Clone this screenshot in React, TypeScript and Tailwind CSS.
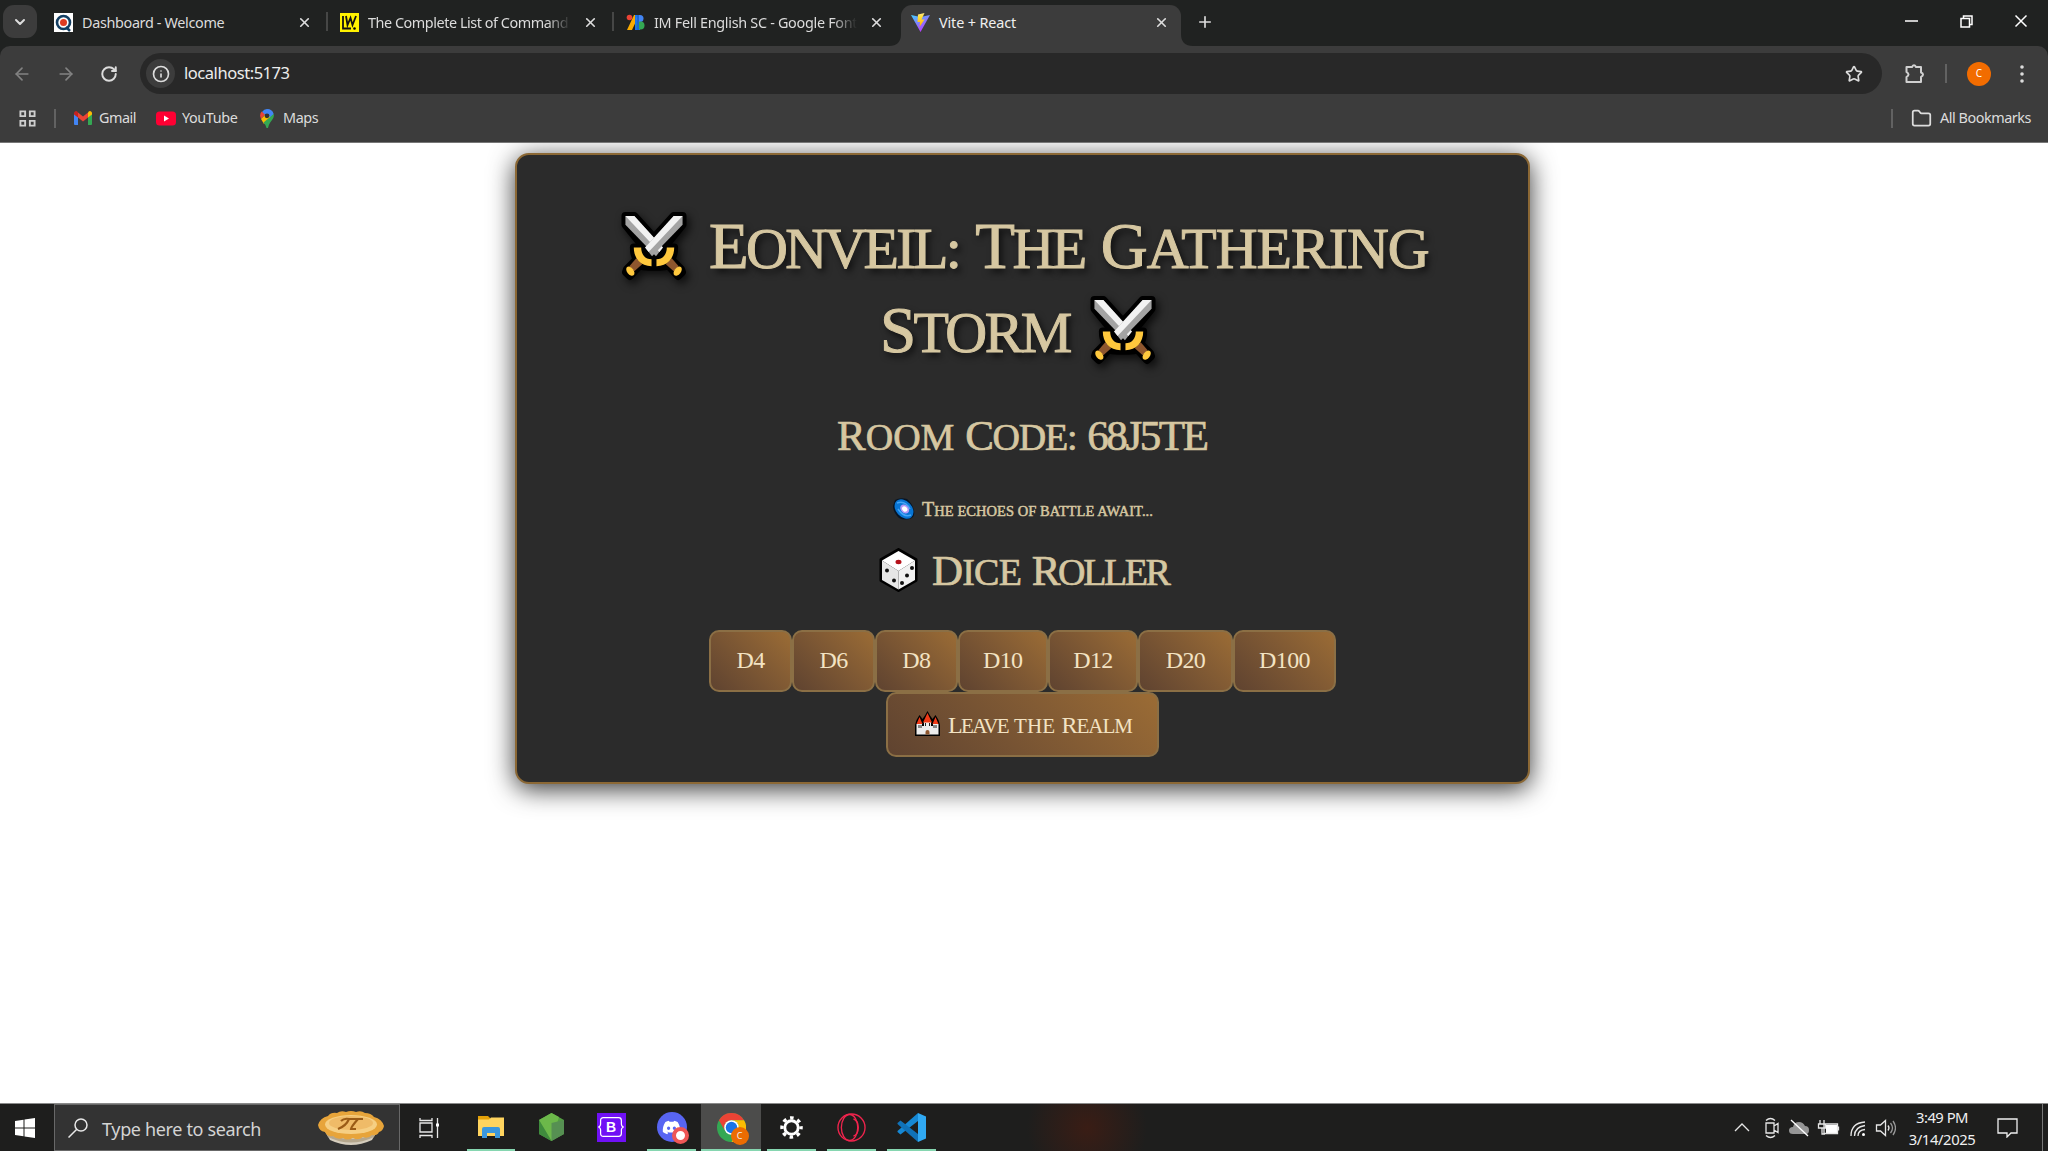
import type { ReactNode } from 'react';
import { FaDiscord } from 'react-icons/fa';
import { Star, Folder, RotateCw, ArrowLeft, ArrowRight, ChevronDown, Info, Plus, X } from 'lucide-react';

/* Capital initial followed by slightly shorter capitals. */
function Caps({ text, track = '', small }: { text: string; track?: string; small: string }) {
  return (
    <span className={track}>
      {text[0]}
      <span className={`uppercase leading-none ${small}`}>{text.slice(1)}</span>
    </span>
  );
}

function Swords({ className = '' }: { className?: string }) {
  const blade = (
    <g>
      <path d="M4 4h9l29 32-7 9L4 13z" fill="#a3a3a3" />
      <path d="M4 4h9l29 32-3.500 4.500L4 4z" fill="#f2f2f2" />
      <path d="M45 53l6-6 7 8-5 5z" fill="#8e562e" />
      <path d="M46 36h7.500c0 11-7 19-18 19v-7c6.500 0 10.500-5 10.500-12z" fill="#ffc83d" />
      <ellipse cx="57" cy="60" rx="3.300" ry="5.300" transform="rotate(38 57 60)" fill="#ffc83d" />
    </g>
  );
  const outline = (
    <path d="M4 4h9l29 32h11.500c0 5-1 9-3 12l10 10 1 3-4 4-10-11c-4 2-8 2-16 1v-8L4 13z" fill="#000" stroke="#000" strokeWidth="8" strokeLinejoin="round" />
  );
  return (
    <svg viewBox="0 0 66 70" className={`h-[69px] w-[66px] shrink-0 drop-shadow-[3px_4px_4px_rgba(0,0,0,0.7)] ${className}`}>
      {outline}
      <g transform="matrix(-1 0 0 1 66 0)">{outline}</g>
      {blade}
      <g transform="matrix(-1 0 0 1 66 0)">{blade}</g>
    </svg>
  );
}

function Galaxy() {
  return (
    <svg viewBox="0 0 22 22" className="mt-px h-[22px] w-[22px]">
      <path d="M2 2Q7-1 14 1Q20 6 21 13Q22 18 19 20Q12 23 6 20Q0 14 0 8Z" fill="#071525" />
      <ellipse cx="11" cy="11" rx="11" ry="8" transform="rotate(48 11 11)" fill="#0875d4" />
      <path d="M4 5q8-3 13 6M18 17q-7 3-13-6" stroke="#45a5f5" strokeWidth="1.500" fill="none" />
      <ellipse cx="11.500" cy="10.500" rx="5" ry="3.800" transform="rotate(45 11 11)" fill="#b59af5" />
      <ellipse cx="11.500" cy="10.500" rx="3" ry="2.300" transform="rotate(45 11 11)" fill="#fff" />
    </svg>
  );
}

function Die() {
  return (
    <svg viewBox="0 0 39 44" className="mt-px h-[44px] w-[39px]">
      <path d="M19.500 1.500L37 11.500v21L19.500 42.500 2 32.500v-21z" fill="#000" stroke="#000" strokeWidth="3" strokeLinejoin="round" />
      <path d="M19.500 3L36 12.500 19.500 23 3 12.500z" fill="#fff" />
      <path d="M3 12.500L19.500 23v18.500L3 32z" fill="#e6e6e6" />
      <path d="M36 12.500L19.500 23v18.500L36 32z" fill="#f1f1f1" />
      <ellipse cx="19.500" cy="14" rx="3" ry="2.200" fill="#b5121b" />
      <g fill="#111"><circle cx="8" cy="22.500" r="2" /><circle cx="15" cy="32.500" r="2" /><circle cx="33" cy="20" r="2" /><circle cx="28" cy="27.500" r="2" /><circle cx="23" cy="35" r="2" /></g>
    </svg>
  );
}

function Castle() {
  return (
    <svg viewBox="0 0 25 26" className="mt-[17px] h-[26px] w-[25px]">
      <path d="M0 25V14l1.500-5L4.500 4l3 4L10 4.500 12.500 0 15 4.500 17.500 8l3-4 3 5L25 14v11z" fill="#000" />
      <path d="M1.500 23.500V13H7v2h2v-4h7v4h2v-2h5.500v10.500z" fill="#ececec" />
      <path d="M1.500 13l3-7 3 7zM8 11.500L12.500 2 17 11.500zM17.500 13l3-7 3 7z" fill="#f03a17" />
      <path d="M4 14v3M6 14v3M10.500 12v3M14.500 12v3M19 14v3M21 14v3" stroke="#222" />
      <path d="M10.500 23.500V21a2 2 0 014 0v2.500z" fill="#8e562e" />
    </svg>
  );
}

function Tab({ icon, title, titleClass, className, fade }: { icon: ReactNode; title: string; titleClass: string; className: string; fade?: string }) {
  return (
    <div className={`flex h-[34px] items-center ${className}`}>
      <div className="h-[19px] w-[19px] shrink-0">{icon}</div>
      <div className={`ml-[9px] mt-[2px] w-[203px] whitespace-nowrap text-[14.4px] ${fade ?? ''}`}>
        <span className={titleClass}>{title}</span>
      </div>
      <X className="ml-[12px] h-[15px] w-[15px] shrink-0 text-[#dedede]" strokeWidth={2.6} />
    </div>
  );
}

const fadeMask = '[mask-image:linear-gradient(to_right,#000_88%,transparent)]';

function Browser() {
  return (
    <header className="h-[143px] bg-[#202221] font-['Noto_Sans','Open_Sans',sans-serif] text-[#dcdcdc]">
      <div className="flex h-[46px] items-start pt-[5px]">
        <div className="ml-[3px] flex h-[33px] w-[34px] items-center justify-center rounded-[11px] bg-[#3c3c3c]">
          <ChevronDown className="h-4 w-4" strokeWidth={3} />
        </div>
        <Tab className="ml-[17px] w-[272px]" title="Dashboard - Welcome" titleClass="tracking-[-0.34px]" icon={
          <svg viewBox="0 0 19 19"><path fill="#fff" d="M0 0h19v19H0z" /><circle cx="9.500" cy="9.500" r="6.500" fill="none" stroke="#143f63" strokeWidth="2.600" /><circle cx="9.500" cy="9.500" r="3.500" fill="#df3c22" /><path d="M12 14l4 4" stroke="#143f63" strokeWidth="2.500" /></svg>
        } />
        <div className="mt-[7px] h-[19px] w-[2px] bg-[#464746]" />
        <Tab className="ml-[12px] w-[272px]" title="The Complete List of Command" titleClass="tracking-[-0.45px]" fade={fadeMask} icon={
          <svg viewBox="0 0 19 19"><path fill="#fff200" d="M0 0h19v19H0z" /><path d="M3 3v12.500H11M6 3l1.500 9L10.500 5l2 7L16 3" fill="none" stroke="#111" strokeWidth="1.800" /><circle cx="14.500" cy="15.500" r="1.300" /></svg>
        } />
        <div className="mt-[7px] h-[19px] w-[2px] bg-[#464746]" />
        <Tab className="ml-[12px] w-[264px]" title="IM Fell English SC - Google Font" titleClass="tracking-[-0.3px]" fade={fadeMask} icon={
          <svg viewBox="0 0 19 19"><path d="M8 2h5L6 17H1z" fill="#f9ab00" /><circle cx="3.500" cy="4.500" r="2.800" fill="#ea4335" /><path d="M9 2h5v15H9z" fill="#1a73e8" /><circle cx="14" cy="5.500" r="3.500" fill="#4285f4" /><circle cx="14.500" cy="12.500" r="4" fill="#34a853" /><path d="M11 2h2v15h-2z" fill="#1967d2" /></svg>
        } />
        <div className="-ml-px flex h-[41px] w-[304px] items-end">
          <svg viewBox="0 0 12 12" className="h-3 w-3 shrink-0"><path d="M12 0v12H0Q12 12 12 0" fill="#3c3c3c" /></svg>
          <div className="h-[41px] w-[280px] rounded-t-[11px] bg-[#3c3c3c]">
            <Tab className="ml-[10px]" title="Vite + React" titleClass="text-[#f0f0f0] tracking-[-0.13px]" icon={
              <svg viewBox="0 0 19 19">
                <defs>
                  <linearGradient id="vite-v" x1="0" y1="0" x2="0.6" y2="1"><stop stopColor="#41d1ff" /><stop offset="1" stopColor="#bd34fe" /></linearGradient>
                  <linearGradient id="vite-b" x1="0" y1="0" x2="0" y2="1"><stop stopColor="#ffea83" /><stop offset="0.3" stopColor="#ffdd35" /><stop offset="1" stopColor="#ffa800" /></linearGradient>
                </defs>
                <path d="M0 2l9.500 17L19 2l-9.500 2z" fill="url(#vite-v)" /><path d="M13.500 0L7 1.500 6.500 9H9l-.5 5 5-7.500h-3z" fill="url(#vite-b)" />
              </svg>
            } />
          </div>
          <svg viewBox="0 0 12 12" className="h-3 w-3 shrink-0"><path d="M0 0v12h12Q0 12 0 0" fill="#3c3c3c" /></svg>
        </div>
        <Plus className="ml-[3px] mt-[8px] h-[18px] w-[18px]" strokeWidth={2.2} />
        <svg viewBox="0 0 124 14" className="ml-auto mr-[20px] mt-[9px] h-[14px] w-[124px]" fill="none" stroke="#fff" strokeWidth="1.500">
          <path d="M1 7h13M111.500 1.500l11 11M122.500 1.500l-11 11" /><path d="M57 4.500h8.500V13H57zM59.500 4V2H68v8.500h-2" />
        </svg>
      </div>

      <div className="h-[97px] rounded-t-[10px] border-b border-[#777] bg-[#3c3c3c]">
        <div className="flex h-[55px] items-center">
          <ArrowLeft className="ml-[12px] h-5 w-5 text-[#828282]" strokeWidth={2} />
          <ArrowRight className="ml-[24px] h-5 w-5 text-[#828282]" strokeWidth={2} />
          <RotateCw className="ml-[24px] h-[18px] w-[18px]" strokeWidth={2.6} />
          <div className="ml-[22px] flex h-[41px] w-[1742px] items-center rounded-full bg-[#282828]">
            <div className="ml-[6px] flex h-[29px] w-[29px] items-center justify-center rounded-full bg-[#3c3c3c]"><Info className="h-[18px] w-[18px]" strokeWidth={2.2} /></div>
            <span className="ml-[9px] text-[16.5px] tracking-[-0.45px] text-[#ececec]">localhost:5173</span>
            <Star className="ml-auto mr-[19px] h-[18px] w-[18px]" strokeWidth={2.2} />
          </div>
          <svg viewBox="0 0 20 20" className="ml-[23px] h-5 w-5" fill="none" stroke="#d0d0d0" strokeWidth="2"><path d="M1.500 3h5.500q2-3.500 4 0h5v5.500q4 1.500 0 4.500V18H1.500v-5q4-2.500 0-5z" strokeLinejoin="round" /></svg>
          <div className="ml-[20px] h-[19px] w-[2px] bg-[#626262]" />
          <div className="ml-[20px] flex h-[24px] w-[24px] items-center justify-center rounded-full bg-[#f26c00] text-[10px] text-white">C</div>
          <svg viewBox="0 0 4 18" className="ml-[29px] h-[18px] w-1 fill-[#dcdcdc]"><circle cx="2" cy="2" r="1.800" /><circle cx="2" cy="9" r="1.800" /><circle cx="2" cy="16" r="1.800" /></svg>
        </div>
        <div className="flex h-[34px] items-center text-[14.4px]">
          <svg viewBox="0 0 18 18" className="ml-[19px] h-[17px] w-[17px]" fill="none" stroke="#cfcfcf" strokeWidth="2"><path d="M1.500 1.500h5v5h-5zM11.500 1.500h5v5h-5zM1.500 11.500h5v5h-5zM11.500 11.500h5v5h-5z" /></svg>
          <div className="ml-[18px] h-[19px] w-[2px] bg-[#626262]" />
          <svg viewBox="0 0 18 14" className="ml-[18px] h-[14px] w-[18px]"><path d="M0 2v11a1 1 0 001 1h3V5z" fill="#4285f4" /><path d="M18 2v11a1 1 0 01-1 1h-3V5z" fill="#34a853" /><path d="M4 5V1.500L9 5.500l5-4V6.500L9 10.500 4 6.500z" fill="#ea4335" /><path d="M0 2a2 2 0 013.500-1.200L4 1.500v5L0 3.500z" fill="#c5221f" /><path d="M18 2a2 2 0 00-3.500-1.200L14 1.500v5l4-3z" fill="#fbbc04" /></svg>
          <span className="ml-[7px] w-[57px] tracking-[-0.5px]">Gmail</span>
          <svg viewBox="0 0 20 14" className="h-[15px] w-[20px]"><rect width="20" height="14" rx="3.500" fill="#f03" /><path d="M8 4v6l5-3z" fill="#fff" /></svg>
          <span className="ml-[6px] w-[78px] tracking-[-0.4px]">YouTube</span>
          <svg viewBox="0 0 14 19" className="h-[19px] w-[14px]"><path d="M7 0a7 7 0 016.700 5L7 13 2 3Q4 0 7 0" fill="#4285f4" /><path d="M1.600 2.500L5 5.500 1 10Q-1 5.500 1.600 2.500" fill="#ea4335" /><path d="M1 10l8-8 1 7-6 6z" fill="#fbbc04" /><path d="M13.700 5c1 4-2 6-3.500 8.500Q8.500 16 8 19H6.500Q6 16 3.500 13.500z" fill="#34a853" /><path d="M4 2Q9-2 13 4L9 8 4.500 4z" fill="#4285f4" /><circle cx="7" cy="6.800" r="2.400" fill="#333" /></svg>
          <span className="ml-[9px] tracking-[-0.4px]">Maps</span>
          <div className="ml-auto h-[19px] w-[2px] bg-[#626262]" />
          <Folder className="ml-[18px] h-[21px] w-[21px]" strokeWidth={2} />
          <span className="ml-[8px] mr-[17px] tracking-[-0.45px]">All Bookmarks</span>
        </div>
      </div>
    </header>
  );
}

const dice = [
  { label: 'D4', size: 'w-[83px]' },
  { label: 'D6', size: 'w-[83px]' },
  { label: 'D8', size: 'w-[82.500px]' },
  { label: 'D10', size: 'w-[90.500px]' },
  { label: 'D12', size: 'w-[90px]' },
  { label: 'D20', size: 'w-[95px]' },
  { label: 'D100', size: 'w-[103px]' },
];

function Card() {
  return (
    <main className="ml-[515px] mt-[10px] flex h-[631px] w-[1015px] flex-col rounded-[14px] border-[2.600px] border-[#8b6835] bg-[#2b2b2b] font-['Liberation_Serif',serif] text-[#d6c7a1] shadow-[0_5px_26px_rgba(0,0,0,0.8)]">
      <h1 className="mt-[49px] whitespace-pre text-[65px] leading-[84px] [-webkit-text-stroke:1px_#d6c7a1] [text-shadow:3px_4px_7px_rgba(0,0,0,0.75)]">
        <div className="ml-[104px] flex h-[84px]">
          <Swords className="mt-[8px]" />
          <span className="ml-[22px]"><Caps text="Eonveil:" track="tracking-[-2.7px]" small="text-[58px]" /> <Caps text="The" track="tracking-[-2.6px]" small="text-[58px]" /> <Caps text="Gathering" track="tracking-[-1px]" small="text-[58px]" /></span>
        </div>
        <div className="ml-[363px] flex h-[84px]">
          <Caps text="Storm" track="tracking-[-2.6px]" small="text-[58px]" />
          <Swords className="ml-[20px] mt-[8px]" />
        </div>
      </h1>
      <h2 className="ml-[320px] mt-[40px] h-[48px] whitespace-pre text-[43px] leading-[48px] [-webkit-text-stroke:0.7px_#d6c7a1]">
        <Caps text="Room" small="text-[38px]" /> <Caps text="Code:" track="tracking-[-1.2px]" small="text-[38px]" /> <span className="tracking-[-2.4px]">68J5TE</span>
      </h2>
      <p className="ml-[376px] mt-[37px] flex h-[24px] whitespace-pre text-[20px] leading-[24px] [-webkit-text-stroke:0.5px_#d6c7a1]">
        <Galaxy />
        <span className="ml-[7px]"><Caps text="The echoes of battle await..." track="tracking-[0.05px]" small="text-[14.5px]" /></span>
      </p>
      <h2 className="ml-[362px] mt-[26px] flex h-[48px] whitespace-pre text-[43px] leading-[48px] [-webkit-text-stroke:0.7px_#d6c7a1]">
        <Die />
        <span className="ml-[14px]"><Caps text="Dice" track="tracking-[-0.8px]" small="text-[38px]" /> <Caps text="Roller" track="tracking-[-2.4px]" small="text-[38px]" /></span>
      </h2>
      <div className="ml-[192px] mt-[35px] flex text-[24px] text-[#f3e3c3]">
        {dice.map(({ label, size }) => (
          <button key={label} className={`h-[62px] rounded-[10px] border-[2.600px] border-[#8b6f45] bg-linear-45 from-[#5f4330] to-[#9b6c35] pb-[2px] tracking-[-0.6px] ${size}`}>{label}</button>
        ))}
      </div>
      <button className="ml-[369px] flex h-[65px] w-[273px] whitespace-pre rounded-[10px] border-[2.600px] border-[#8b6f45] bg-linear-45 from-[#5f4330] to-[#9b6c35] pl-[27px] text-[24px] leading-[62px] text-[#f3e3c3]">
        <Castle />
        <span className="ml-[8px]"><Caps text="Leave" track="tracking-[-1.6px]" small="text-[21px]" /> <span className="text-[21px] uppercase tracking-[0.2px]">the</span> <Caps text="Realm" track="tracking-[-1px]" small="text-[21px]" /></span>
      </button>
    </main>
  );
}

function AppSlot({ children, active, line }: { children?: ReactNode; active?: boolean; line?: string }) {
  return (
    <div className={`flex h-full w-[60px] flex-col items-center ${active ? 'bg-[#4c4c4b]' : ''}`}>
      <div className="flex h-[45px] items-center justify-center pt-px">{children}</div>
      {line && <div className={`h-[2px] bg-[#86d6b0] ${line}`} />}
    </div>
  );
}

function Taskbar() {
  return (
    <footer className="flex h-[48px] items-center border-t border-[#8a8a8a] bg-[#1e1e1d] bg-[radial-gradient(ellipse_60px_60px_at_1087px_24px,#3a1d15,#1e1e1d)] font-['Noto_Sans','Open_Sans',sans-serif] text-[#f0f0f0]">
      <svg viewBox="0 0 20 20" className="ml-[15px] h-5 w-5 fill-white"><path d="M0 3l8.500-1.200v7.700H0zM9.500 1.600L20 0v9.500H9.500zM0 10.500h8.500v7.700L0 17zM9.500 10.500H20V20L9.500 18.400z" /></svg>
      <div className="ml-[19px] flex h-[47px] w-[346px] items-center border border-[#686868] bg-[#333]">
        <svg viewBox="0 0 20 20" className="ml-[13px] h-5 w-5" fill="none" stroke="#e8e8e8" strokeWidth="1.500"><circle cx="13" cy="7" r="6" /><path d="M8.800 11.200L.5 19.500" /></svg>
        <span className="ml-[14px] mt-[3px] text-[18px] tracking-[-0.35px] text-[#d4d4d4]">Type here to search</span>
        <svg viewBox="0 0 66 34" className="ml-auto mr-[15px] mt-px h-[34px] w-[66px]">
          <path d="M5 17l7 12q21 10 42 0l7-12z" fill="#d5cdbd" /><path d="M8 22q25 12 50 0l-2 4q-23 11-46 0z" fill="#b5a78d" />
          <path d="M0 14q2-7 10-9 3-4 9-3 4-3 9-1 5-2 10 0 5-2 9 1 6 0 9 4 8 2 10 9-1 5-5 6-2 4-7 3-4 4-9 2-5 4-10 1-6 3-10 0-6 2-10-2-6 1-8-4-6-1-7-7" fill="#e7a43a" />
          <ellipse cx="33" cy="13.500" rx="26" ry="9.500" fill="#f6cf83" /><ellipse cx="33" cy="12" rx="22" ry="7" fill="#efbb68" />
          <path d="M23 10q3-3 8-2h14M31 8q-3 7-11 10M40 8q-7 8-7 10h5" fill="none" stroke="#9a5b16" strokeWidth="2.200" />
        </svg>
      </div>
      <svg viewBox="0 0 21 20" className="ml-[19px] h-5 w-[21px]" fill="none" stroke="#e8e8e8" strokeWidth="1.300"><path d="M1 5h12v9H1zM1 0v2.500h12V0M1 20v-2.500h12V20M18.500 0v20" /><path d="M17 5.500h3v3h-3z" fill="#fff" stroke="none" /></svg>
      <div className="ml-[21px] flex h-full">
        <AppSlot line="w-[48px]">
          <svg viewBox="0 0 26 22" className="h-[22px] w-[26px]"><path d="M0 0h10l2 2v4H0z" fill="#e3a008" /><path d="M0 3.500h11l2-2h13V20H0z" fill="#ffd45e" /><path d="M4 22V13q0-2 2-2h14q2 0 2 2v9h-5v-5H9v5z" fill="#3b97dd" /></svg>
        </AppSlot>
        <AppSlot>
          <svg viewBox="0 0 25 28" className="h-[28px] w-[25px]"><path d="M12.500 0L25 7v14l-12.500 7L0 21V7z" fill="#539e43" /><path d="M12.500 0L0 7l12.500 21L20 4z" fill="#6cb84a" /><path d="M12.500 10L25 7v14l-12.500 7z" fill="#569052" /><path d="M0 7v14l12.500 7z" fill="#3f8b3d" /></svg>
        </AppSlot>
        <AppSlot>
          <div className="flex h-[29px] w-[29px] items-center justify-center bg-[#7010f5]">
            <svg viewBox="0 0 26 20" className="h-5 w-[26px]"><path d="M5 0h16q3 0 3 3v4q0 2 2 3-2 1-2 3v4q0 3-3 3H5q-3 0-3-3v-4q0-2-2-3 2-1 2-3V3q0-3 3-3" fill="none" stroke="#fff" strokeWidth="1.300" transform="translate(.7 .7) scale(.945 .93)" /><text x="13" y="15" textAnchor="middle" fontFamily="Liberation Sans" fontWeight="bold" fontSize="14" fill="#fff">B</text></svg>
          </div>
        </AppSlot>
        <AppSlot line="w-[49px]">
          <div className="relative ml-[1px] flex h-[30px] w-[30px] items-center justify-center rounded-full bg-[#5865f2]">
            <FaDiscord className="mr-px h-[19px] w-[19px] text-white" />
            <span className="absolute -bottom-[2px] -right-[2px] h-[17px] w-[17px] rounded-full border-[4.500px] border-[#ee5656] bg-white" />
          </div>
        </AppSlot>
        <AppSlot active line="w-full">
          <div className="relative">
            <svg viewBox="0 0 48 48" className="h-[29px] w-[29px]"><circle cx="24" cy="24" r="24" fill="#34a853" /><path d="M3.200 12A24 24 0 0144.800 12H24a12 12 0 00-10.400 18z" fill="#ea4335" /><path d="M44.800 12A24 24 0 0124 48l10.400-18A12 12 0 0024 12z" fill="#fbbc04" /><circle cx="24" cy="24" r="12" fill="#fff" /><circle cx="24" cy="24" r="9.500" fill="#1a73e8" /></svg>
            <span className="absolute -bottom-[3px] -right-[3px] flex h-[18px] w-[18px] items-center justify-center rounded-full bg-[#ec6c02] text-[9px]">C</span>
          </div>
        </AppSlot>
        <AppSlot line="w-[49px]">
          <svg viewBox="0 0 24 24" className="h-[23px] w-[23px]" fill="none" stroke="#fff"><circle cx="12" cy="12" r="7" strokeWidth="3" /><circle cx="12" cy="12" r="10" strokeWidth="3.500" strokeDasharray="3.700 4.154" strokeDashoffset="1.800" /></svg>
        </AppSlot>
        <AppSlot line="w-[49px]">
          <svg viewBox="0 0 30 30" className="h-[29px] w-[29px]" fill="none" stroke="#f0244d" strokeWidth="1.400"><circle cx="15" cy="15" r="14" /><ellipse cx="13" cy="15" rx="8.500" ry="13.500" /><path d="M17 6q5 2 5 9t-5 9" /></svg>
        </AppSlot>
        <AppSlot line="w-[49px]">
          <svg viewBox="0 0 29 29" className="h-[29px] w-[29px]"><path d="M21 0l8 3.500v22L21 29z" fill="#30a9f3" /><path d="M21 0v8L3.500 21.500.5 19v-1z" fill="#1688d4" /><path d="M21 29v-8L3.500 7.500.5 10v1z" fill="#1072b8" /></svg>
        </AppSlot>
      </div>
      <svg viewBox="0 0 162 22" className="ml-auto mt-px h-[22px] w-[162px]" fill="none" stroke="#e6e6e6" strokeWidth="1.300">
        <path d="M1 14l7-7 7 7" />
        <path d="M32 6h8v10h-8zM40 9l4-2.500v9L40 13M32 3.500q4.500-4 9 0M32 18.500q4.500 4 9 0" />
        <path d="M59 17q-4 0-4-3.500T59 10q1-5 6-5 4 0 6 4 4 0 4 4t-3 4z" fill="#969696" stroke="none" /><path d="M57 3l17 16" stroke="#fff" />
        <path d="M92 8h11v8H92z" fill="#fff" stroke="none" /><path d="M90 7h13.500v9.500H90zM104.500 9.500v4M86 3v4M90 3v4M84.500 7h7v4h-7zM88 11v6h3" />
        <path d="M117 19Q117 6 131 5M120.500 19q0-9 10.500-10.500M124 19q0-6 7-6.500" /><circle cx="129.500" cy="17.500" r="1.500" fill="#fff" stroke="none" />
        <path d="M142.500 8h4l5-4.500v15l-5-4.500h-4zM154 8.500q2 2.500 0 5" /><path d="M156.500 6q4 5 0 10M159 4q5 7 0 14" stroke="#999" />
      </svg>
      <div className="ml-[12px] flex w-[68px] flex-col items-center whitespace-nowrap pt-px text-[14.8px] leading-[22.500px] tracking-[-0.5px]"><span>3:49 PM</span><span className="tracking-[-0.400px]">3/14/2025</span></div>
      <svg viewBox="0 0 21 20" className="ml-[21px] h-5 w-[21px]" fill="none" stroke="#f0f0f0" strokeWidth="1.300"><path d="M1 1h19v14h-6l-4 4v-4H1z" /></svg>
      <div className="ml-[24px] mr-[5px] h-full w-px bg-[#777]" />
    </footer>
  );
}

export default function App() {
  return (
    <div className="flex h-[1151px] w-[2048px] flex-col overflow-hidden bg-white">
      <div className="relative z-10"><Browser /></div>
      <div className="flex-1"><Card /></div>
      <Taskbar />
    </div>
  );
}
